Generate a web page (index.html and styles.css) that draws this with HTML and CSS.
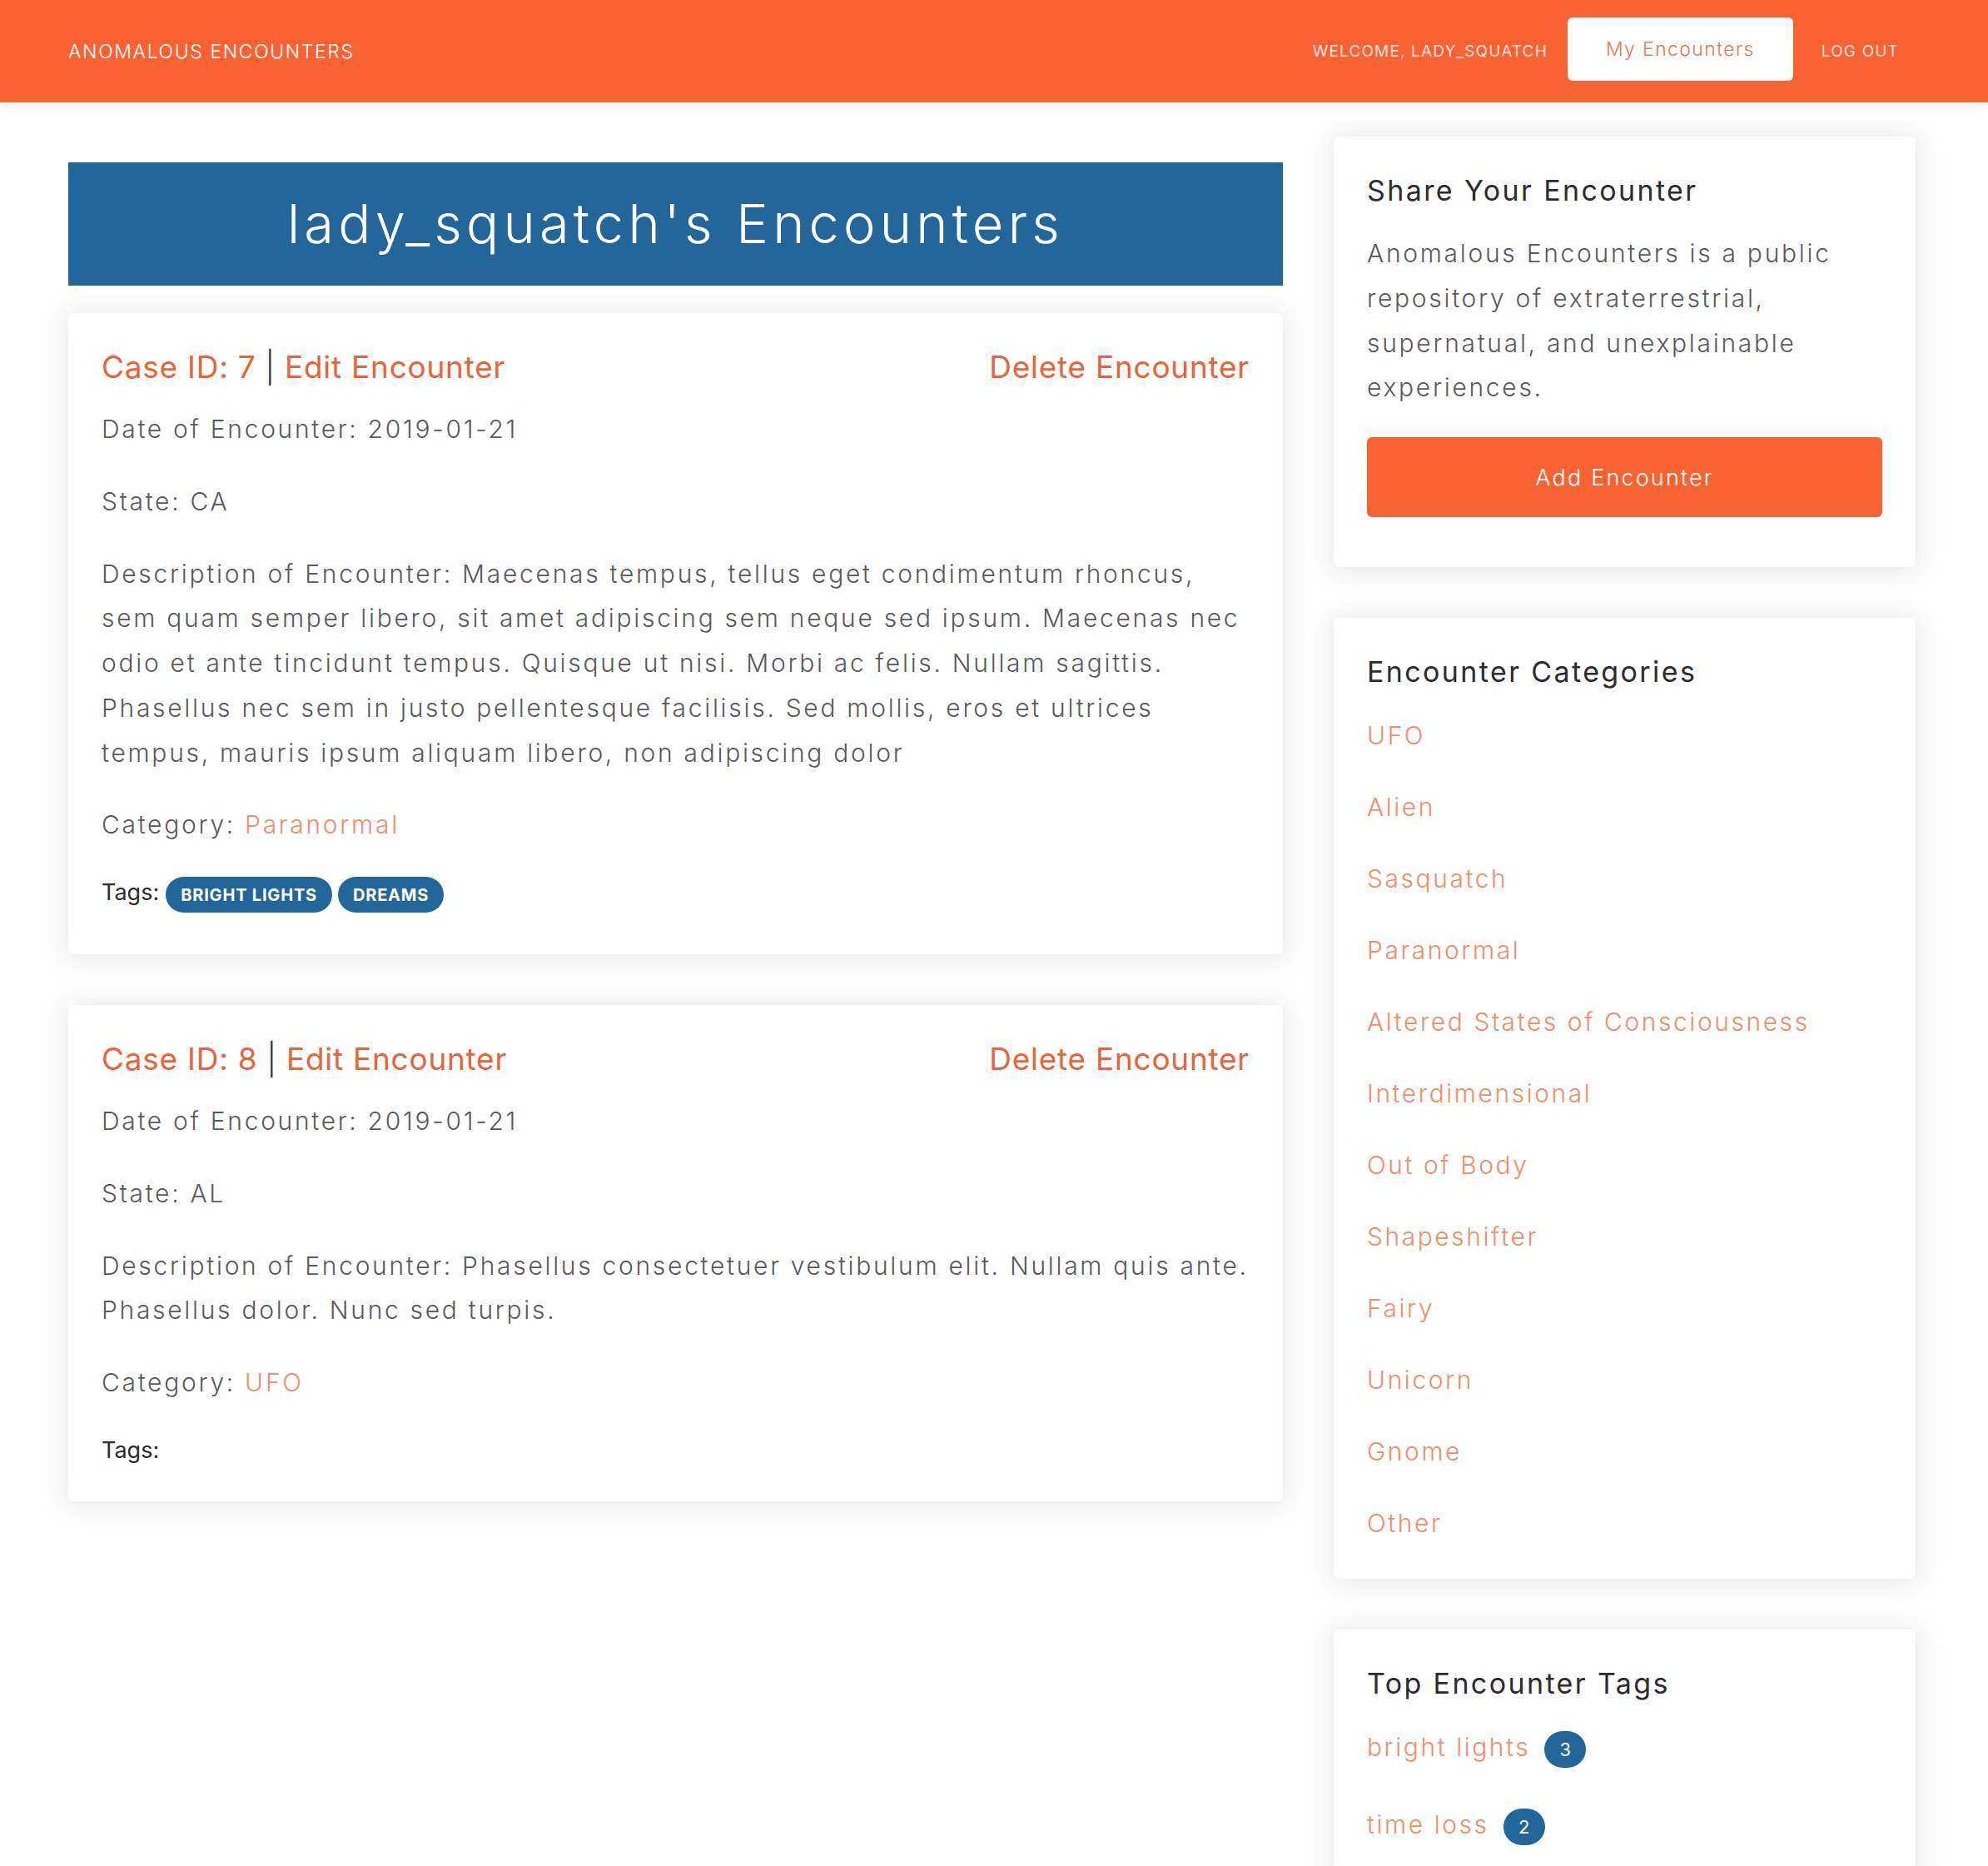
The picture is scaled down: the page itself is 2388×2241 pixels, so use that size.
FILE: index.html
```html
<!DOCTYPE html>
<html lang="en">
<head>
<meta charset="utf-8">
<title>Anomalous Encounters</title>
<link rel="stylesheet" href="styles.css">
</head>
<body>
<nav class="navbar">
  <a class="brand" href="#">Anomalous Encounters</a>
  <ul class="nav-links">
    <li><span class="nav-text nav-welcome">Welcome, lady_squatch</span></li>
    <li><a class="nav-btn" href="#">My Encounters</a></li>
    <li><a class="nav-text nav-logout" href="#">Log out</a></li>
  </ul>
</nav>

<div class="page">
  <main class="main-col">
    <h1 class="hero">lady_squatch's Encounters</h1>

    <article class="card enc">
      <div class="enc-head">
        <div class="enc-head-left"><a href="#">Case ID: 7</a> <span class="sep">|</span> <a href="#">Edit Encounter</a></div>
        <a class="enc-del" href="#">Delete Encounter</a>
      </div>
      <p>Date of Encounter: 2019-01-21</p>
      <p>State: CA</p>
      <p>Description of Encounter: Maecenas tempus, tellus eget condimentum rhoncus, sem quam semper libero, sit amet adipiscing sem neque sed ipsum. Maecenas nec odio et ante tincidunt tempus. Quisque ut nisi. Morbi ac felis. Nullam sagittis. Phasellus nec sem in justo pellentesque facilisis. Sed mollis, eros et ultrices tempus, mauris ipsum aliquam libero, non adipiscing dolor</p>
      <p>Category: <a class="soft-link" href="#">Paranormal</a></p>
      <div class="tags">
        <span class="tags-label">Tags:</span>
        <a class="badge" href="#">bright lights</a>
        <a class="badge" href="#">dreams</a>
      </div>
    </article>

    <article class="card enc">
      <div class="enc-head">
        <div class="enc-head-left"><a href="#">Case ID: 8</a> <span class="sep">|</span> <a href="#">Edit Encounter</a></div>
        <a class="enc-del" href="#">Delete Encounter</a>
      </div>
      <p>Date of Encounter: 2019-01-21</p>
      <p>State: AL</p>
      <p>Description of Encounter: Phasellus consectetuer vestibulum elit. Nullam quis ante. Phasellus dolor. Nunc sed turpis.</p>
      <p>Category: <a class="soft-link" href="#">UFO</a></p>
      <div class="tags">
        <span class="tags-label">Tags:</span>
      </div>
    </article>
  </main>

  <aside class="side-col">
    <section class="card side-card">
      <h4 class="side-title">Share Your Encounter</h4>
      <p class="side-text">Anomalous Encounters is a public repository of extraterrestrial, supernatual, and unexplainable experiences.</p>
      <a class="btn-add" href="#">Add Encounter</a>
    </section>

    <section class="card side-card">
      <h4 class="side-title">Encounter Categories</h4>
      <ul class="cat-list">
        <li><a class="soft-link" href="#">UFO</a></li>
        <li><a class="soft-link" href="#">Alien</a></li>
        <li><a class="soft-link" href="#">Sasquatch</a></li>
        <li><a class="soft-link" href="#">Paranormal</a></li>
        <li><a class="soft-link" href="#">Altered States of Consciousness</a></li>
        <li><a class="soft-link" href="#">Interdimensional</a></li>
        <li><a class="soft-link" href="#">Out of Body</a></li>
        <li><a class="soft-link" href="#">Shapeshifter</a></li>
        <li><a class="soft-link" href="#">Fairy</a></li>
        <li><a class="soft-link" href="#">Unicorn</a></li>
        <li><a class="soft-link" href="#">Gnome</a></li>
        <li><a class="soft-link" href="#">Other</a></li>
      </ul>
    </section>

    <section class="card side-card">
      <h4 class="side-title">Top Encounter Tags</h4>
      <ul class="tag-list">
        <li><a class="soft-link" href="#">bright lights</a><span class="count">3</span></li>
        <li><a class="soft-link" href="#">time loss</a><span class="count">2</span></li>
      </ul>
    </section>
  </aside>
</div>
</body>
</html>
```

FILE: styles.css
```css
* { box-sizing: border-box; }

html, body { margin: 0; padding: 0; }

body {
  font-family: Inter, "Open Sans", "Liberation Sans", sans-serif;
  font-weight: 300;
  color: #2c2c2c;
  background: #ffffff;
}

a { color: #e6653a; text-decoration: none; }

.soft-link { color: #f08e6a; }

/* ---------- navbar ---------- */
.navbar {
  height: 123px;
  background: #f96332;
  display: flex;
  align-items: center;
  justify-content: space-between;
  padding: 0 82px;
  box-shadow: 0 3px 14px rgba(0, 0, 0, 0.07);
}

.brand {
  color: #ffffff;
  font-size: 23px;
  font-weight: 300;
  letter-spacing: 0.07em;
  text-transform: uppercase;
}

.nav-links {
  display: flex;
  align-items: center;
  list-style: none;
  margin: 0;
  padding: 0;
}

.nav-text {
  display: block;
  padding: 0 24px;
  color: rgba(255, 255, 255, 0.82);
  font-size: 19px;
  font-weight: 400;
  letter-spacing: 0.06em;
  text-transform: uppercase;
}

.nav-logout { padding-left: 34px; padding-right: 25px; }

.nav-btn {
  display: flex;
  align-items: center;
  height: 76px;
  margin-bottom: 6px;
  padding: 0 46px;
  background: #ffffff;
  border-radius: 6px;
  color: #e27a55;
  font-size: 23px;
  font-weight: 300;
  letter-spacing: 0.06em;
}

/* ---------- layout ---------- */
.page {
  display: grid;
  grid-template-columns: 1459px 699px;
  column-gap: 61px;
  align-items: start;
  padding: 41px 0 60px 82px;
}

.hero {
  margin: 31px 0 33px;
  height: 148px;
  background: #236699;
  color: #ffffff;
  font-size: 65px;
  font-weight: 300;
  line-height: 148px;
  letter-spacing: 0.08em;
  text-align: center;
}

.card {
  background: #ffffff;
  border-radius: 6px;
  box-shadow: 0 2px 30px 2px rgba(39, 39, 39, 0.12);
}

/* ---------- encounter cards ---------- */
.enc {
  padding: 38px 40px 40px;
  margin-bottom: 61px;
}

.enc-head {
  display: flex;
  justify-content: space-between;
  margin-bottom: 21px;
  font-size: 37px;
  font-weight: 400;
  line-height: 54px;
  letter-spacing: 0.02em;
}

.sep { color: #2c2c2c; font-weight: 300; }

.enc p {
  margin: 0 0 33px;
  color: #5a5a5a;
  font-size: 30px;
  line-height: 53.75px;
  letter-spacing: 0.09em;
}

.tags {
  display: flex;
  align-items: flex-start;
  gap: 7px;
}

.tags-label {
  color: #2c2c2c;
  font-size: 27px;
  font-weight: 400;
  line-height: 42px;
  margin-right: 1px;
}

.badge {
  display: flex;
  align-items: center;
  height: 43px;
  margin: 2px 0 10px;
  padding: 0 18px;
  border-radius: 22px;
  background: #236699;
  color: #ffffff;
  font-size: 20px;
  font-weight: 700;
  letter-spacing: 0.04em;
  text-transform: uppercase;
}

/* ---------- sidebar ---------- */
.side-card {
  padding: 40px;
  margin-bottom: 61px;
}

.side-title {
  margin: 0 0 24px;
  color: #2c2c2c;
  font-size: 34px;
  font-weight: 400;
  line-height: 50px;
  letter-spacing: 0.07em;
}

.side-text {
  margin: 0 0 32px;
  color: #5a5a5a;
  font-size: 30px;
  line-height: 53.75px;
  letter-spacing: 0.09em;
}

.btn-add {
  display: flex;
  align-items: center;
  justify-content: center;
  height: 96px;
  margin-bottom: 20px;
  background: #f96332;
  border-radius: 6px;
  color: #ffffff;
  font-size: 27px;
  font-weight: 300;
  letter-spacing: 0.08em;
}

.cat-list,
.tag-list {
  list-style: none;
  margin: 0;
  padding: 0;
  font-size: 30px;
  letter-spacing: 0.085em;
}

.cat-list li {
  line-height: 54px;
  margin-bottom: 32px;
}

.cat-list li:last-child { margin-bottom: 0; }

.tag-list li {
  display: flex;
  align-items: center;
  gap: 17px;
  line-height: 54px;
  margin-bottom: 39px;
}

.tag-list li:last-child { margin-bottom: 0; }

.count {
  display: flex;
  align-items: center;
  justify-content: center;
  width: 50px;
  height: 44px;
  margin-top: 6px;
  border-radius: 22px;
  background: #236699;
  color: #ffffff;
  font-size: 22px;
  font-weight: 400;
  letter-spacing: 0;
}
```
